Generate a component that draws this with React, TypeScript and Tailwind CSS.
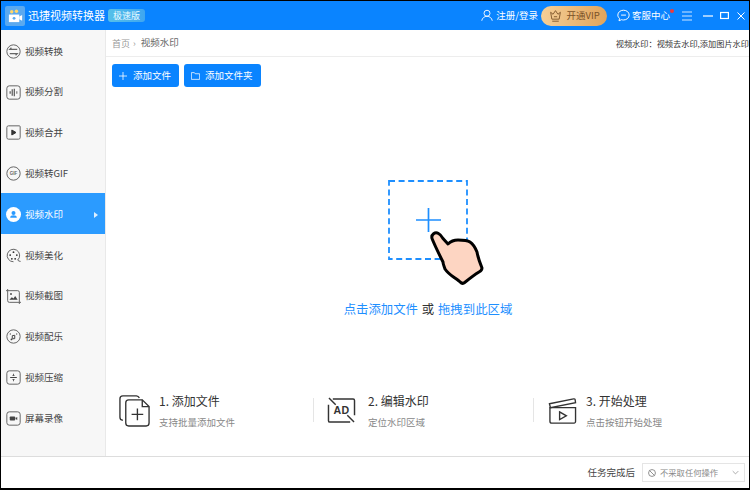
import React from "react";

const font = "font-['Noto_Sans_CJK_SC','Noto_Sans',sans-serif]";

const stroke = { fill: "none", stroke: "currentColor", strokeWidth: 1.2 };
const iconCls = "w-[15px] h-[15px] shrink-0";

const navItems: { label: string; icon: React.ReactNode; active?: boolean }[] = [
  {
    label: "视频转换",
    icon: (
      <svg viewBox="0 0 18 18" className={iconCls} {...stroke}>
        <circle cx="9" cy="9" r="8" />
        <path d="M6.500 4.500 4.500 6.500h9M11.500 13.500l2-2h-9" strokeWidth="1.400" />
      </svg>
    ),
  },
  {
    label: "视频分割",
    icon: (
      <svg viewBox="0 0 18 18" className={iconCls} {...stroke}>
        <rect x="1" y="1" width="16" height="16" rx="3" />
        <path d="M5 7.500v3M7.500 5v8M10 4.500v9" strokeWidth="1.600" />
        <path d="M13 7.500v3" />
      </svg>
    ),
  },
  {
    label: "视频合并",
    icon: (
      <svg viewBox="0 0 18 18" className={iconCls} {...stroke}>
        <path d="M3 1h13a1 1 0 0 1 1 1v13a2 2 0 0 1-2 2H3a2 2 0 0 1-2-2V3a2 2 0 0 1 2-2Z" />
        <path d="m7 6 5 3-5 3Z" fill="#333" stroke="#333" />
      </svg>
    ),
  },
  {
    label: "视频转GIF",
    icon: (
      <svg viewBox="0 0 18 18" className={iconCls} {...stroke}>
        <circle cx="9" cy="9" r="8" />
        <text x="9" y="11" textAnchor="middle" fontSize="5.400" fontWeight="700" fill="currentColor" stroke="none" fontFamily="Liberation Sans">GIF</text>
      </svg>
    ),
  },
  {
    label: "视频水印",
    active: true,
    icon: (
      <svg viewBox="0 0 18 18" className={iconCls}>
        <circle cx="9" cy="9" r="9" fill="#fff" />
        <circle cx="9" cy="7.200" r="2.400" fill="#2b9bff" />
        <path d="M5 13c0-2.200 1.800-3 4-3s4 .8 4 3Z" fill="#2b9bff" />
      </svg>
    ),
  },
  {
    label: "视频美化",
    icon: (
      <svg viewBox="0 0 18 18" className={iconCls} {...stroke}>
        <path d="M9 16.500a7.500 7.500 0 1 1 5-2c1 .9 2 1.600 3.500 1.600" />
        <circle cx="9" cy="5" r="1.100" fill="#333" stroke="none" />
        <circle cx="5" cy="8.500" r="1.100" fill="#333" stroke="none" />
        <circle cx="13" cy="8.500" r="1.100" fill="#333" stroke="none" />
        <circle cx="7" cy="13" r="1.100" fill="#333" stroke="none" />
        <circle cx="11" cy="13" r="1.100" fill="#333" stroke="none" />
      </svg>
    ),
  },
  {
    label: "视频截图",
    icon: (
      <svg viewBox="0 0 18 18" className={iconCls} {...stroke}>
        <path d="M2 0v14a2 2 0 0 0 2 2h14M0 2h14a2 2 0 0 1 2 2v14" />
        <circle cx="6" cy="6" r="1.100" fill="#444" stroke="none" />
        <path d="m4 13 3-3 2 1.500 2-3 3 4.500Z" fill="#444" stroke="none" />
      </svg>
    ),
  },
  {
    label: "视频配乐",
    icon: (
      <svg viewBox="0 0 18 18" className={iconCls} {...stroke}>
        <circle cx="9" cy="9" r="8" />
        <path d="M4.500 6h1.500M12 6h1.500M7.500 8l3-.5v4M7.500 8v4.500" stroke="#444" />
        <circle cx="6.500" cy="12.500" r="1" fill="#444" stroke="none" />
        <circle cx="9.500" cy="11.500" r="1" fill="#444" stroke="none" />
      </svg>
    ),
  },
  {
    label: "视频压缩",
    icon: (
      <svg viewBox="0 0 18 18" className={iconCls} {...stroke}>
        <rect x="1" y="1" width="16" height="16" rx="3" />
        <path d="M5 9h8" stroke="#444" />
        <path d="M9 4.500v2.500M9 11v2.500M7.800 6l1.200 1.200L10.200 6M7.800 12l1.200-1.200 1.200 1.200" stroke="#444" strokeWidth="1" />
      </svg>
    ),
  },
  {
    label: "屏幕录像",
    icon: (
      <svg viewBox="0 0 18 18" className={iconCls} {...stroke}>
        <rect x="1" y="1" width="16" height="16" rx="3" />
        <rect x="4.500" y="6.500" width="6.500" height="5" rx="1" fill="#444" stroke="none" />
        <path d="m11.500 8.500 2-1.200v3.400l-2-1.200Z" fill="#444" stroke="none" />
      </svg>
    ),
  },
];

const steps = [
  {
    title: "1. 添加文件",
    sub: "支持批量添加文件",
    box: "w-[195px]",
    iconGap: "mr-[8px]",
    dividerGap: "",
    icon: (
      <svg viewBox="0 0 34 34" className="w-[33px] h-[33px]" fill="none" stroke="#333" strokeWidth="1.400">
        <path d="M5 27a3 3 0 0 1-3-3V5a3 3 0 0 1 3-3h14a4 4 0 0 1 3 2" />
        <path d="M11 6h14l7 7v17a3 3 0 0 1-3 3H11a3 3 0 0 1-3-3V9a3 3 0 0 1 3-3Z" />
        <path d="M25 6v7h7M20 15v12M14 21h12" />
      </svg>
    ),
  },
  {
    title: "2. 编辑水印",
    sub: "定位水印区域",
    box: "w-[220px]",
    iconGap: "mr-[12px]",
    dividerGap: "mr-[13px]",
    icon: (
      <svg viewBox="0 0 30 28" className="w-[29px] h-[27px]" fill="none" stroke="#333" strokeWidth="1.500">
        <path d="M6 2h21a1.500 1.500 0 0 1 1.500 1.500V19M24 26H3a1.500 1.500 0 0 1-1.500-1.500V8" />
        <path d="m2 1 7 7M21 19l7 7" />
        <text x="15" y="18" textAnchor="middle" fontSize="11" fontWeight="700" fill="#333" stroke="none" fontFamily="Liberation Sans" letterSpacing="0.400">AD</text>
      </svg>
    ),
  },
  {
    title: "3. 开始处理",
    sub: "点击按钮开始处理",
    box: "",
    iconGap: "mr-[9px]",
    dividerGap: "mr-[14px]",
    icon: (
      <svg viewBox="0 0 30 30" className="w-[29px] h-[29px]" fill="none" stroke="#333" strokeWidth="1.400">
        <path d="M2 12v14a2 2 0 0 0 2 2h23a1.500 1.500 0 0 0 1.500-1.500V12Z" />
        <path d="m1.500 8 25-5c1-.2 1.500.3 1.600 1l.4 3-26 5-1-4Z" />
        <path d="m12 16.500 7 4-7 4Z" />
      </svg>
    ),
  },
];

export default function App() {
  return (
    <div className={`${font} w-[750px] h-[490px] bg-black pl-[1px] pr-[1px] pb-[2px] pt-[1px] overflow-hidden`}>
      <div className="flex flex-col w-full h-full bg-white">
        {/* title bar */}
        <div className="flex items-center h-[29px] bg-[#0a84ff] text-white shrink-0">
          <div className="ml-[4px] w-[20px] h-[20px] rounded-[2px] bg-[#5aa9ef] flex items-center justify-center">
            <svg viewBox="0 0 18 18" className="w-[17px] h-[17px]">
              <path d="M2 8h11v8H2Z" fill="#fff" />
              <path d="m13 10 3-1.500v6l-3-1.500Z" fill="#fff" />
              <circle cx="5" cy="5" r="1.800" fill="#ffd76a" />
              <circle cx="10" cy="4.500" r="1.800" fill="#ffd76a" />
              <circle cx="7.500" cy="12" r="1.500" fill="#5aa9ef" />
            </svg>
          </div>
          <span className="ml-[3px] text-[11px] leading-none">迅捷视频转换器</span>
          <span className="ml-[3px] w-[37px] h-[13px] text-center rounded-[3px] bg-gradient-to-r from-[#56c0e8] to-[#3fa6f0] text-[9px] leading-[13px] text-[#e8fbff]">极速版</span>

          <svg viewBox="0 0 16 16" className="ml-auto w-[12px] h-[13px]" fill="none" stroke="#fff" strokeWidth="1.200">
            <circle cx="8" cy="5" r="4" />
            <path d="M1 15c.5-3.500 3.500-6 7-6s6.500 2.500 7 6" />
          </svg>
          <span className="ml-[3px] text-[9.500px] leading-none whitespace-nowrap">注册/登录</span>
          <div className="ml-[3.500px] flex items-center w-[66px] h-[20px] rounded-full bg-gradient-to-r from-[#f5cf97] to-[#e0a45c] text-[#7a5228]">
            <svg viewBox="0 0 16 16" className="ml-[8px] w-[13px] h-[13px]" fill="none" stroke="#7a5228" strokeWidth="1.100">
              <path d="m2 4 3 2.500L8 2l3 4.500L14 4l-1.500 8.500h-9Z" />
              <path d="M6 9.500h4M4 15h8" />
            </svg>
            <span className="ml-[4px] text-[9.500px] leading-none whitespace-nowrap">开通VIP</span>
          </div>
          <svg viewBox="0 0 16 16" className="ml-[9.500px] w-[13px] h-[13px]" fill="none" stroke="#fff" strokeWidth="1.200">
            <path d="M8 1.500c3.800 0 7 2.500 7 6s-3.200 6-7 6c-.8 0-1.600-.1-2.400-.4L2.500 14.500l.6-3C1.800 10.400 1 9 1 7.500c0-3.500 3.200-6 7-6Z" />
            <path d="M5 7.500h6" />
          </svg>
          <div className="relative ml-[2px] flex items-center">
            <span className="text-[9.500px] leading-none whitespace-nowrap">客服中心</span>
            <span className="absolute -top-[2px] -right-[4px] w-[4px] h-[4px] rounded-full bg-[#f03a3a]" />
          </div>
          <svg viewBox="0 0 10 10" className="ml-[12px] w-[10px] h-[10px]" fill="none" stroke="#cfe6ff" strokeWidth="1">
            <path d="M0 1h10M0 5h10M0 9h10" />
          </svg>
          <svg viewBox="0 0 10 10" className="ml-[11px] w-[10px] h-[10px]" fill="none" stroke="#fff" strokeWidth="1.200">
            <path d="M0 5h10" />
          </svg>
          <svg viewBox="0 0 9 9" className="ml-[7px] w-[9px] h-[9px]" fill="none" stroke="#fff" strokeWidth="1.200">
            <rect x="0.600" y="1.500" width="7.800" height="6" />
          </svg>
          <svg viewBox="0 0 8 8" className="ml-[8px] mr-[4px] w-[8px] h-[8px]" fill="none" stroke="#fff" strokeWidth="1">
            <path d="m.5.500 7 7M7.500.500l-7 7" />
          </svg>
        </div>

        <div className="flex flex-1 min-h-0">
          {/* sidebar */}
          <div className="w-[105px] shrink-0 bg-[#f7f7f7] border-r border-[#e9e9e9]">
            {navItems.map((item) => (
              <div
                key={item.label}
                className={`flex items-center h-[40.800px] pt-[2px] pl-[5px] ${item.active ? "bg-[#2b9bff] text-white" : "text-[#666]"}`}
              >
                {item.icon}
                <span className={`ml-[4px] text-[9.500px] leading-none ${item.active ? "text-white" : "text-[#444]"}`}>{item.label}</span>
                {item.active && (
                  <span className="ml-[31px] w-0 h-0 border-y-[3.500px] border-y-transparent border-l-[4px] border-l-[#dcefff]" />
                )}
              </div>
            ))}
          </div>

          {/* main */}
          <div className="flex-1 min-w-0 flex flex-col">
            <div className="flex items-center h-[27px] border-b border-[#ededed] pl-[6px] shrink-0">
              <span className="text-[9px] leading-none text-[#999]">首页</span>
              <span className="ml-[3px] text-[9px] leading-none text-[#999]">›</span>
              <span className="ml-[5px] text-[9.500px] leading-none text-[#666]">视频水印</span>
              <span className="ml-auto text-[8.200px] leading-none text-[#333] whitespace-nowrap">视频水印：视频去水印,添加图片水印</span>
            </div>

            <div className="flex gap-[5px] pl-[6px] pt-[7px]">
              <div className="flex items-center w-[67px] h-[23px] rounded-[3px] bg-[#0a84ff] text-white pl-[7px]">
                <svg viewBox="0 0 10 10" className="w-[8px] h-[8px]" fill="none" stroke="#fff" strokeWidth="1">
                  <path d="M5 0v10M0 5h10" />
                </svg>
                <span className="ml-[6px] text-[9.500px] leading-none">添加文件</span>
              </div>
              <div className="flex items-center w-[77px] h-[23px] rounded-[3px] bg-[#0a84ff] text-white pl-[7px]">
                <svg viewBox="0 0 12 10" className="w-[9px] h-[8px]" fill="none" stroke="#fff" strokeWidth="1">
                  <path d="M.5.500h4l1 1.500h6v7.500H.5Z" />
                </svg>
                <span className="ml-[5px] text-[9.500px] leading-none">添加文件夹</span>
              </div>
            </div>

            {/* drop zone */}
            <div className="flex flex-col items-center pt-[93px] pl-[1px]">
              <div className="relative w-[80px] h-[80px]">
                <svg viewBox="0 0 80 80" className="w-[80px] h-[80px]" fill="none">
                  <rect x="1" y="1" width="78" height="78" stroke="#1e8fff" strokeWidth="1.800" strokeDasharray="6 3.600" />
                  <path d="M40.500 28v24M28 40h25" stroke="#1e8fff" strokeWidth="1.700" />
                </svg>
                <svg viewBox="-1 -1 54 54" className="absolute left-[42px] top-[51px] w-[54px] h-[54px]">
                  <path
                    d="M1 6.500C0 2.500 4-.5 7.500 1.500 9.500 2.500 10.500 4 12 6.500L17 12c2-2 6-4 10-4s9 0 12 2c3 2 5 5 7 10 1 6 3 11 5 16 0 2-1 3-3 4-5 3-10 7-15 11-2 1-3 0-5-2-5-4-10-6-14-12-1-3-2-5-2-7C8 22 4 14 1 6.500Z"
                    fill="#fdd5c2"
                    stroke="#000"
                    strokeWidth="3"
                    strokeLinejoin="round"
                  />
                </svg>
              </div>
              <div className="mt-[40px] text-[12.400px] leading-[18px] text-[#1e8fff] whitespace-nowrap">
                点击添加文件 <span className="text-[#333] mx-[1px]">或</span> 拖拽到此区域
              </div>
            </div>

            {/* steps */}
            <div className="mt-auto mb-[16px] flex pl-[12px] h-[60px] items-center">
              {steps.map((s, i) => (
                <div key={s.title} className={`flex items-center ${s.box}`}>
                  {i > 0 && <div className={`w-[1px] h-[24px] bg-[#e5e5e5] ${s.dividerGap}`} />}
                  <div className={`flex justify-center ${s.iconGap}`}>{s.icon}</div>
                  <div className="flex flex-col">
                    <span className="text-[12px] leading-[16px] text-[#333] whitespace-nowrap">{s.title}</span>
                    <span className="mt-[7px] text-[9.500px] leading-[12px] text-[#888] whitespace-nowrap">{s.sub}</span>
                  </div>
                </div>
              ))}
            </div>
          </div>
        </div>

        {/* bottom bar */}
        <div className="flex items-center h-[32px] border-t border-[#dddddd] bg-white shrink-0">
          <span className="ml-auto text-[9.500px] leading-none text-[#444]">任务完成后</span>
          <div className="ml-[7px] mr-[4px] flex items-center w-[103px] h-[19px] border border-[#e5e5e5] pl-[5px] pr-[5px]">
            <svg viewBox="0 0 10 10" className="w-[8px] h-[8px]" fill="none" stroke="#777" strokeWidth="1">
              <circle cx="5" cy="5" r="4.300" />
              <path d="m2 2 6 6" />
            </svg>
            <span className="ml-[4px] text-[8.300px] leading-none text-[#888]">不采取任何操作</span>
            <svg viewBox="0 0 10 6" className="ml-auto w-[7px] h-[5px]" fill="none" stroke="#888" strokeWidth="1">
              <path d="m1 1 4 4 4-4" />
            </svg>
          </div>
        </div>
      </div>
    </div>
  );
}
